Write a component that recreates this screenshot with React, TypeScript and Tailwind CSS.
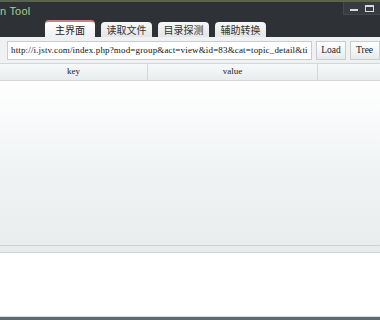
import React from "react";

const tabs = ["主界面", "读取文件", "目录探测", "辅助转换"];

export default function App() {
  return (
    <div className="w-[380px] h-[320px] overflow-hidden flex flex-col bg-[#eef1f2] font-['Noto_Sans_CJK_SC',sans-serif]">
      {/* title bar */}
      <div className="h-[37px] shrink-0 bg-[#2e3136] border-t-2 border-[#5c6250] relative flex flex-col">
        <div className="pl-0 pt-[2px] text-[11px] leading-[14px] text-[#a6d08c] font-['Liberation_Sans',sans-serif] tracking-[0.2px]">
          n Tool
        </div>
        <div className="absolute right-0 top-0 w-[37px] h-[13px] bg-[#383b40] border-l border-b border-[#45484d] flex items-center justify-around px-[3px]">
          <span className="w-[8px] h-[2px] bg-[#d8dadc] mt-[4px]" />
          <span className="w-[9px] h-[7px] border border-[#d8dadc] border-t-2" />
        </div>
        <div className="mt-auto flex items-end gap-[6px] pl-[45px]">
          {tabs.map((t, i) => (
            <div
              key={t}
              className={
                i === 0
                  ? "w-[50px] h-[17px] rounded-t-[4px] border-t-2 border-[#d07e86] bg-gradient-to-b from-[#ffffff] to-[#eef0f1] flex items-center justify-center text-[10px] leading-none text-[#222]"
                  : "w-[51px] h-[15px] rounded-t-[4px] bg-gradient-to-b from-[#f7f7f7] to-[#e3e5e6] flex items-center justify-center text-[10px] leading-none text-[#333]"
              }
            >
              {t}
            </div>
          ))}
        </div>
      </div>

      {/* url bar */}
      <div className="h-[25px] shrink-0 flex items-center gap-[4px] pl-[7px] pt-[2px] bg-[#eff1f2]">
        <div className="w-[313px] h-[19px] bg-white border border-[#c9cdd0] flex items-center pl-[3px] overflow-hidden whitespace-nowrap text-[9px] tracking-[0.15px] text-[#111] font-['Liberation_Serif',serif]">
          http://i.jstv.com/index.php?mod=group&amp;act=view&amp;id=83&amp;cat=topic_detail&amp;ti
        </div>
        <div className="w-[30px] h-[19px] shrink-0 border border-[#c9cdd0] bg-gradient-to-b from-white to-[#e8eaeb] flex items-center justify-center text-[9.5px] text-[#222] font-['Liberation_Serif',serif]">
          Load
        </div>
        <div className="w-[30px] h-[19px] shrink-0 border border-[#c9cdd0] bg-gradient-to-b from-white to-[#e8eaeb] flex items-center pl-[5px] text-[9.5px] text-[#222] font-['Liberation_Serif',serif]">
          Tree
        </div>
      </div>

      {/* table header */}
      <div className="h-[18px] mt-[1px] shrink-0 flex border-t border-b border-[#d3d7da] bg-gradient-to-b from-[#f7f8f9] to-[#e9ecee] text-[9px] text-[#222] font-['Liberation_Serif',serif]">
        <div className="w-[148px] flex items-center justify-center border-r border-[#d3d7da]">key</div>
        <div className="w-[170px] flex items-center justify-center border-r border-[#d3d7da]">value</div>
        <div className="flex-1" />
      </div>

      {/* table body */}
      <div className="h-[164px] shrink-0 bg-gradient-to-b from-[#ffffff] via-[#f1f4f5] to-[#e9edee]" />

      {/* splitter */}
      <div className="h-[8px] shrink-0 bg-[#e7ebec] border-t border-b border-[#cfd5d7]" />

      {/* lower panel */}
      <div className="flex-1 bg-white border-b border-[#d7dcde]" />
      <div className="h-[3px] shrink-0 bg-[#5d6c6c]" />
    </div>
  );
}
